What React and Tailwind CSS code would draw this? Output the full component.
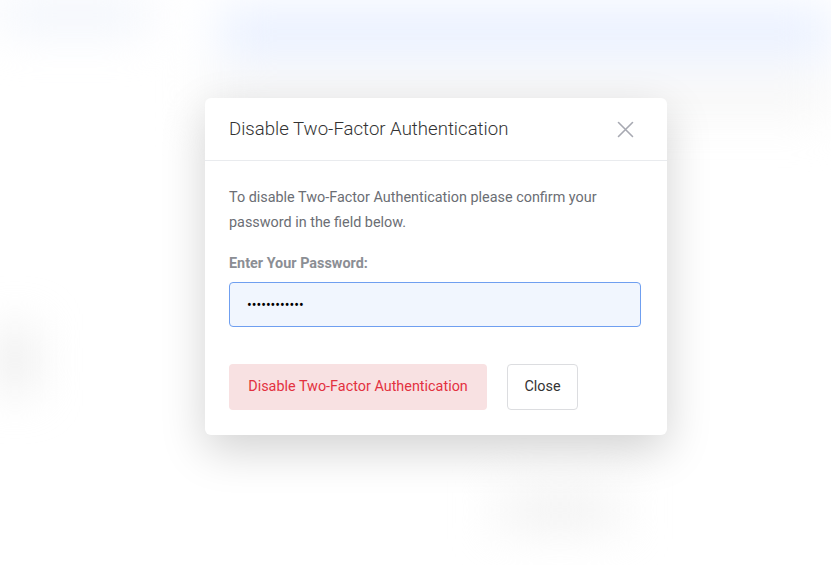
import React from 'react';

function BlurredPage() {
    return (
        <div className="absolute inset-0 overflow-hidden blur-xl">
            <div className="flex h-full">
                {/* sidebar */}
                <div className="w-[200px] shrink-0 flex flex-col">
                    <div className="h-[30px] w-[150px] bg-[#eef2fb]"></div>
                    <div className="mt-[300px] h-[60px] w-[30px] bg-[#e6e6e6]"></div>
                </div>
                {/* content */}
                <div className="flex-1 flex flex-col">
                    <div className="mt-[10px] ml-[20px] h-[45px] bg-[#e6eeff]"></div>
                    <div className="mt-[20px] h-[40px] bg-[#f6f6f6]"></div>
                    <div className="mt-[380px] ml-[300px] h-[30px] w-[120px] bg-[#ededed]"></div>
                </div>
            </div>
        </div>
    );
}

export default function App() {
    return (
        <div className="relative w-[831px] h-[565px] bg-white overflow-hidden" style={{ fontFamily: 'Roboto, "Liberation Sans", sans-serif' }}>
            <BlurredPage />

            {/* Modal */}
            <div className="absolute left-[205px] top-[98px] w-[462px] bg-white rounded-md shadow-[0_15px_45px_rgba(0,0,0,0.18)]">
                <div className="flex items-center justify-between h-[63px] pl-6 pr-[33px] pt-px border-b border-[#e9ebee]">
                    <h2 className="text-[18.6px] font-light text-[#333]">Disable Two-Factor Authentication</h2>
                    <button className="text-[#a7a9b2]">
                        <svg width="17" height="17" viewBox="0 0 17 17" fill="none" stroke="currentColor" strokeWidth="1.6" strokeLinecap="round">
                            <path d="M1.5 1.5l14 14M15.5 1.5l-14 14" />
                        </svg>
                    </button>
                </div>
                <div className="px-6 pt-6 pb-[25px]">
                    <p className="text-[14.4px] leading-[25px] text-[#6b6e74]">
                        To disable Two-Factor Authentication please confirm your password in the field below.
                    </p>
                    <label className="block mt-[19px] text-[14.4px] leading-[20px] font-bold text-[#8b8e94]">Enter Your Password:</label>
                    <input
                        type="password"
                        defaultValue="abcdefghijkl"
                        className="mt-2 block w-[412px] h-[45px] px-[17px] rounded border border-[#6f9ff0] bg-[#f1f6fe] text-[14px] text-black outline-none"
                    />
                    <div className="flex gap-5 mt-[37px]">
                        <button className="h-[46px] w-[258px] rounded bg-[#f8e1e2] text-[14.4px] text-[#e3313f]">
                            Disable Two-Factor Authentication
                        </button>
                        <button className="h-[46px] w-[71px] rounded border border-[#dcdde0] bg-white text-[14.4px] text-[#333]">
                            Close
                        </button>
                    </div>
                </div>
            </div>
        </div>
    );
}
